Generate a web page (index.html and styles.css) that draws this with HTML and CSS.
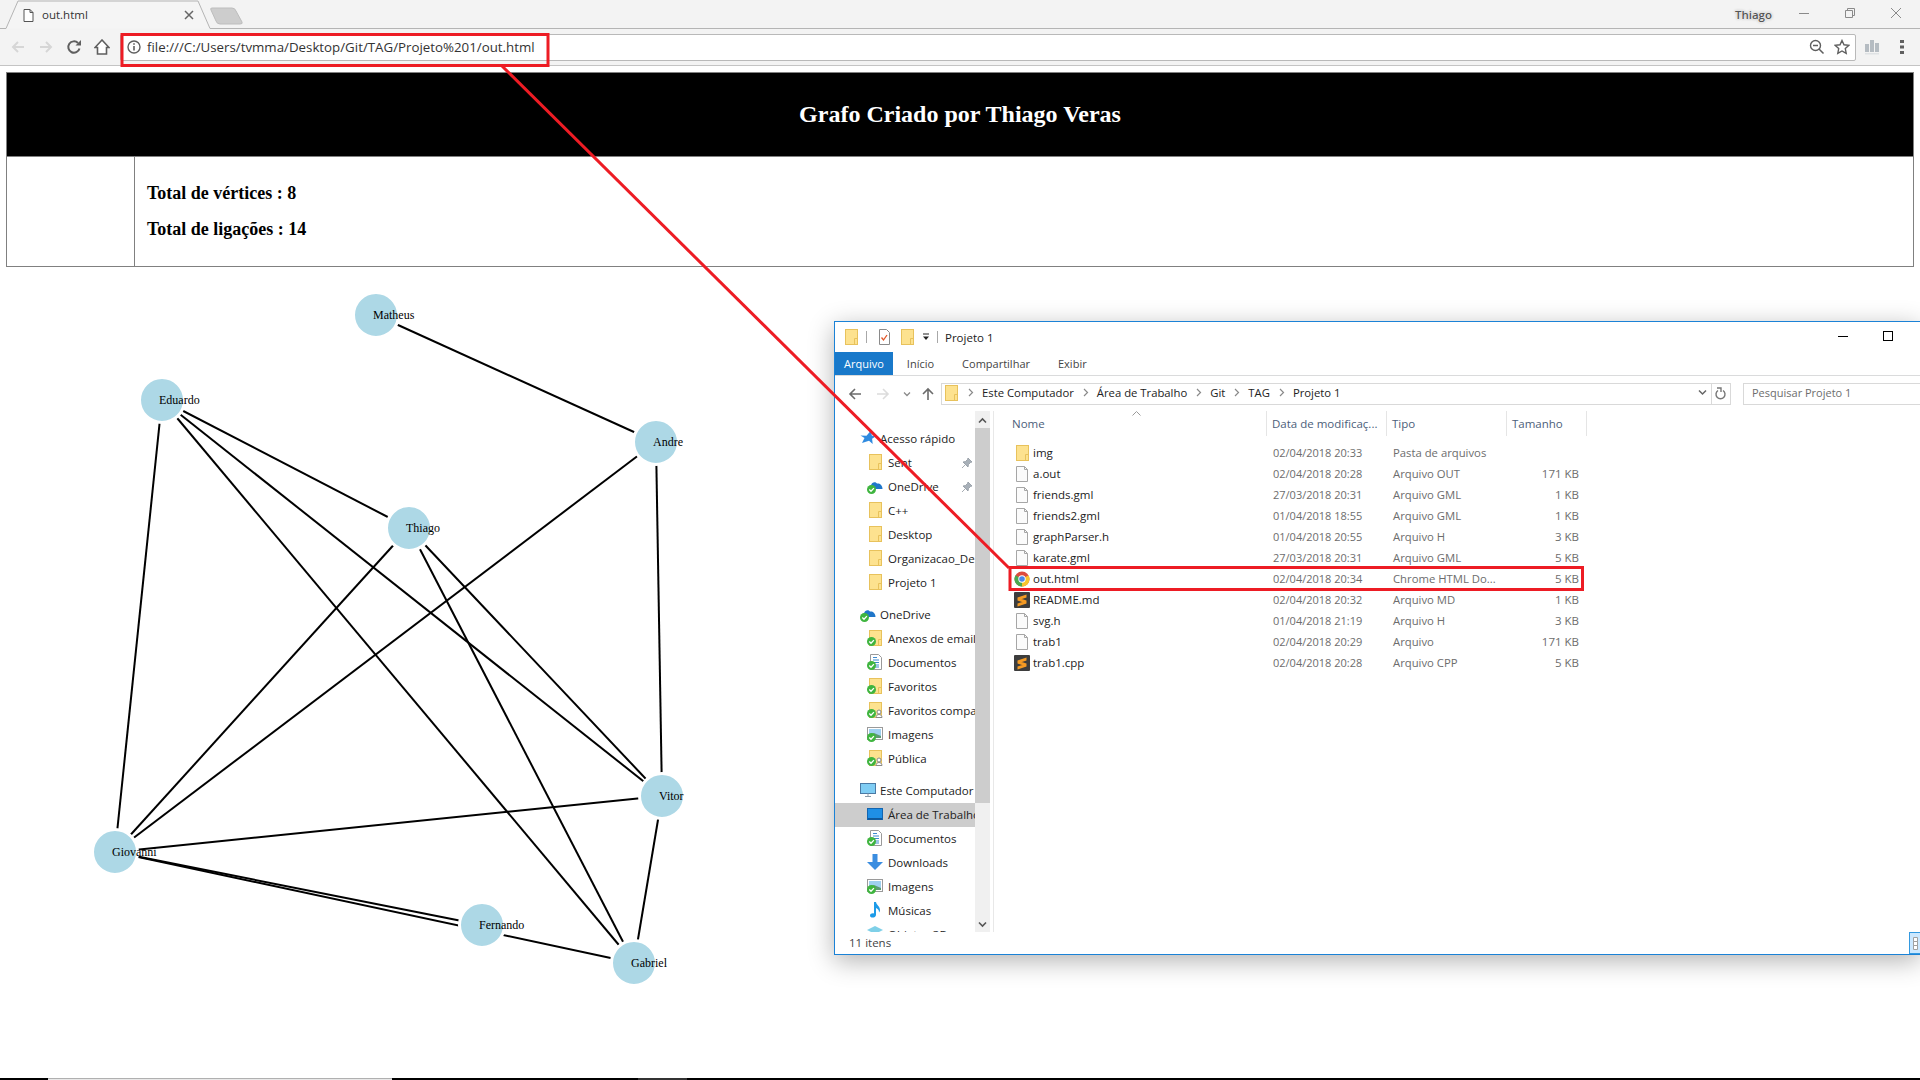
FILE: index.html
```html
<!DOCTYPE html>
<html lang="pt-BR">
<head>
  <meta charset="UTF-8" />
  <meta name="viewport" content="width=device-width, initial-scale=1.0" />
  <title>out.html</title>
  <link rel="stylesheet" href="styles.css">
</head>
<body>
  <!-- shared icons -->
  <svg class="hidden">
    <symbol id="i-folder" viewBox="0 0 16 16"><rect x="2.5" y="0.5" width="12" height="15" fill="#fde28f" stroke="#e8c25c"/><path d="M11.5 15.5V9.5h3" fill="none" stroke="#e8c25c"/></symbol>
    <symbol id="i-doc" viewBox="0 0 16 16"><path d="M2.5.5h8l3 3v12h-11z" fill="#fbfbfb" stroke="#a6a6a6"/><path d="M10.5.5v3h3" fill="none" stroke="#a6a6a6"/></symbol>
    <symbol id="i-check" viewBox="0 0 16 16"><circle cx="4.5" cy="11.5" r="4.5" fill="#3fb53f"/><path d="M2.3 11.5l1.7 1.8 2.9-3.2" fill="none" stroke="#fff" stroke-width="1.3"/></symbol>
    <symbol id="i-cloud" viewBox="0 0 16 16"><path d="M4 11c-2.500 0-2.500-3.500 0-3.800C4.800 4.500 8 3 10 5.500c2.500-.5 5.500 1.500 5.500 5.500z" fill="#1f76c9"/></symbol>
    <symbol id="i-star" viewBox="0 0 16 16"><path d="M11 .5l.8 5 3.700 1-3.400 2.200.6 5.300-3.700-3.300L2 13l2.500-5L.5 5.500l6 .2z" fill="#2f8be0"/></symbol>
    <symbol id="i-pc" viewBox="0 0 16 16"><rect x=".5" y="1.500" width="15" height="10" fill="#7fcdf4" stroke="#4a7aa5"/><path d="M5 14.500h6M8 11.500v3" stroke="#8a9aa8"/></symbol>
    <symbol id="i-desktop" viewBox="0 0 16 16"><rect x=".5" y="2.500" width="15" height="11" fill="#1f8fe6" stroke="#1365b0"/><path d="M1 12.800h14" stroke="#0b3f78"/></symbol>
    <symbol id="i-docs" viewBox="0 0 16 16"><path d="M3.500.5h8l3 3v12h-11z" fill="#fff" stroke="#9a9a9a"/><path d="M6 3.500h4M6 6h6M6 8.500h6M6 11h6M6 13h6" stroke="#3c8bd0"/></symbol>
    <symbol id="i-pics" viewBox="0 0 16 16"><rect x=".5" y="1.500" width="15" height="12" fill="#fff" stroke="#9a9a9a"/><rect x="2" y="3" width="12" height="9" fill="#9fd0ef"/><path d="M2 9l5-2 7 3v2H2z" fill="#5c9b72"/></symbol>
    <symbol id="i-dl" viewBox="0 0 16 16"><path d="M5.500 0h5v8H16l-8 8-8-8h5.500z" fill="#3a8de0"/></symbol>
    <symbol id="i-music" viewBox="0 0 16 16"><path d="M7 0h2c.3 3 4 4 4 8 0 1-.5 2-1 2.500.3-3-2-4-3-4.500v7c0 3-6 3.500-6 .8C3 11.500 5.500 11 7 11.500z" fill="#1d9be8"/></symbol>
    <symbol id="i-share" viewBox="0 0 16 16"><circle cx="12" cy="10" r="2" fill="#fff" stroke="#8a8a8a"/><path d="M9 15.500c0-4 6-4 6 0z" fill="#fff" stroke="#8a8a8a"/></symbol>
    <symbol id="i-pin" viewBox="0 0 12 12"><path d="M7 1l4 4-1.500.5-2 2L7 10 2 5l2.500-.5 2-2zM4 8l-3 3" fill="#a8b0b8" stroke="#8f979f" stroke-width=".8"/></symbol>
    <symbol id="i-crumb" viewBox="0 0 7 9"><path d="M2 1l3.500 3.500L2 8" fill="none" stroke="#8a8a8a" stroke-width="1.200"/></symbol>
    <symbol id="i-sublime" viewBox="0 0 16 16"><rect width="16" height="16" rx="1" fill="#3d3d3d"/><path d="M12.500 2.500v3l-9 3v-3zM3.500 5.500l9 3v3l-9-3zM12.500 8.500v3l-9 3v-3z" fill="#f59a23"/></symbol>
  </svg>

  <header class="browser">
    <div class="tabstrip">
      <svg class="tab-shape" width="250" height="29" viewBox="0 0 250 29">
        <path d="M0 28.500h6L18 1h180l12 27.500h40" fill="#f5f5f5" stroke="#b4b4b4"/>
        <path d="M212 8h20q3 0 4 3l6 11q1 2-2 2h-20q-3 0-4-3l-5-11q-1-2 1-2z" fill="#cdcdcd" stroke="#bdbdbd"/>
        <path d="M24 9.500h6l3 3v9h-9zM30 9.500v3h3" fill="#fff" stroke="#555"/>
        <path d="M185 11l8 8M193 11l-8 8" stroke="#666" stroke-width="1.500"/>
      </svg>
      <span class="tab-title">out.html</span>
      <span class="profile">Thiago</span>
      <div class="win-buttons">
        <svg width="10" height="10" viewBox="0 0 10 10"><path d="M0 5.500h10" stroke="#8a8a8a"/></svg>
        <svg width="10" height="10" viewBox="0 0 10 10"><path d="M.5 2.500h7v7h-7zM2.500 2.500v-2h7v7h-2" fill="none" stroke="#8a8a8a"/></svg>
        <svg width="10" height="10" viewBox="0 0 10 10"><path d="M0 0l10 10M10 0L0 10" stroke="#8a8a8a"/></svg>
      </div>
    </div>
    <div class="toolbar">
      <div class="nav-buttons">
        <svg width="16" height="16" viewBox="0 0 16 16"><path d="M14 8H3M8 3L3 8l5 5" fill="none" stroke="#d6d6d6" stroke-width="2"/></svg>
        <svg width="16" height="16" viewBox="0 0 16 16"><path d="M2 8h11M8 3l5 5-5 5" fill="none" stroke="#d6d6d6" stroke-width="2"/></svg>
        <svg width="16" height="16" viewBox="0 0 16 16"><path d="M13.500 9.500A5.700 5.700 0 1 1 12 4" fill="none" stroke="#5f5f5f" stroke-width="2"/><path d="M9.500 6.500H15V1z" fill="#5f5f5f"/></svg>
        <svg width="16" height="16" viewBox="0 0 16 16"><path d="M8 1L1 8.500h2.500v6.500h9V8.500H15z" fill="#fff" stroke="#5f5f5f" stroke-width="1.600"/></svg>
      </div>
      <div class="omnibox">
        <svg width="14" height="14" viewBox="0 0 14 14"><circle cx="7" cy="7" r="6" fill="none" stroke="#5f5f5f" stroke-width="1.400"/><path d="M7 6v4.500M7 3.200v1.600" stroke="#5f5f5f" stroke-width="1.600"/></svg>
        <span class="url">file:///C:/Users/tvmma/Desktop/Git/TAG/Projeto%201/out.html</span>
        <svg class="omni-end" width="16" height="16" viewBox="0 0 16 16"><circle cx="6.500" cy="6.500" r="5" fill="none" stroke="#5f5f5f" stroke-width="1.400"/><path d="M4 6.500h5M10 10l4.500 4.500" stroke="#5f5f5f" stroke-width="1.500"/></svg>
        <svg width="16" height="16" viewBox="0 0 16 16"><path d="M8 1.500l2 4.300 4.700.6-3.400 3.200.9 4.700L8 12l-4.200 2.300.9-4.700L1.300 6.400 6 5.800z" fill="none" stroke="#5f5f5f" stroke-width="1.400"/></svg>
      </div>
      <div class="toolbar-end">
        <svg width="16" height="16" viewBox="0 0 16 16"><path d="M1 5h4v8H1zM6 1h4v12H6zM11 4h4v9h-4z" fill="#b5bcc2"/><path d="M1 14h14v1.500H1z" fill="#dfe2e4"/></svg>
        <svg width="4" height="14" viewBox="0 0 4 14"><path d="M0 0h4v3H0zM0 5.500h4v3H0zM0 11h4v3H0z" fill="#5f5f5f"/></svg>
      </div>
    </div>
  </header>

  <main class="page">
    <table class="summary">
      <tr><th colspan="2">Grafo Criado por Thiago Veras</th></tr>
      <tr>
        <td class="summary-side"></td>
        <td class="summary-info">
          <h3>Total de vértices : 8</h3>
          <h3>Total de ligações : 14</h3>
        </td>
      </tr>
    </table>

    <svg class="graph" width="1920" height="811" viewBox="0 267 1920 811">
      <g class="edges">
        <line x1="376" y1="315" x2="656" y2="442"/>
        <line x1="162" y1="400" x2="409" y2="528"/>
        <line x1="162" y1="400" x2="662" y2="796"/>
        <line x1="162" y1="400" x2="634" y2="963"/>
        <line x1="162" y1="400" x2="115" y2="852"/>
        <line x1="656" y1="442" x2="115" y2="852"/>
        <line x1="656" y1="442" x2="662" y2="796"/>
        <line x1="409" y1="528" x2="115" y2="852"/>
        <line x1="409" y1="528" x2="662" y2="796"/>
        <line x1="409" y1="528" x2="634" y2="963"/>
        <line x1="662" y1="796" x2="115" y2="852"/>
        <line x1="662" y1="796" x2="634" y2="963"/>
        <line x1="115" y1="852" x2="482" y2="925"/>
        <line x1="115" y1="852" x2="634" y2="963"/>
      </g>
      <g class="nodes">
        <circle cx="376" cy="315" r="22.500"/>
        <circle cx="162" cy="400" r="22.500"/>
        <circle cx="656" cy="442" r="22.500"/>
        <circle cx="409" cy="528" r="22.500"/>
        <circle cx="662" cy="796" r="22.500"/>
        <circle cx="115" cy="852" r="22.500"/>
        <circle cx="482" cy="925" r="22.500"/>
        <circle cx="634" cy="963" r="22.500"/>
      </g>
      <g class="labels">
        <text x="373" y="319">Matheus</text>
        <text x="159" y="404">Eduardo</text>
        <text x="653" y="446">Andre</text>
        <text x="406" y="532">Thiago</text>
        <text x="659" y="800">Vitor</text>
        <text x="112" y="856">Giovanni</text>
        <text x="479" y="929">Fernando</text>
        <text x="631" y="967">Gabriel</text>
      </g>
    </svg>
  </main>

  <div class="page-edge">
    <span class="edge-black edge-a"></span>
    <span class="edge-track"></span>
    <span class="edge-black edge-b"></span>
    <span class="edge-dark"></span>
    <span class="edge-black edge-c"></span>
  </div>

  <section class="explorer">
    <div class="ex-title">
      <svg class="ico"><use href="#i-folder"/></svg>
      <span class="ex-sep"></span>
      <svg class="ico ex-check" viewBox="0 0 16 16"><path d="M3.500.5h7l3 3v12h-10z" fill="#fff" stroke="#8a8a8a"/><path d="M5.500 8.500l2 2.500 3.500-5" fill="none" stroke="#e2582a" stroke-width="1.300"/></svg>
      <svg class="ico"><use href="#i-folder"/></svg>
      <svg width="8" height="8" viewBox="0 0 8 8"><path d="M1 1h6" stroke="#222"/><path d="M1 3.500h6L4 7z" fill="#222"/></svg>
      <span class="ex-sep"></span>
      <span>Projeto 1</span>
      <div class="ex-buttons">
        <span class="ex-min"></span>
        <span class="ex-max"></span>
      </div>
    </div>
    <nav class="ex-ribbon">
      <span class="ribbon-file">Arquivo</span>
      <span>Início</span>
      <span>Compartilhar</span>
      <span>Exibir</span>
    </nav>
    <div class="ex-nav">
      <svg width="14" height="14" viewBox="0 0 14 14"><path d="M13 7H2M7 2L2 7l5 5" fill="none" stroke="#6b6b6b" stroke-width="1.600"/></svg>
      <svg class="nav-forward" width="14" height="14" viewBox="0 0 14 14"><path d="M1 7h11M7 2l5 5-5 5" fill="none" stroke="#dcdcdc" stroke-width="1.600"/></svg>
      <svg class="nav-recent" width="8" height="8" viewBox="0 0 8 8"><path d="M1 2.500l3 3 3-3" fill="none" stroke="#8a8a8a" stroke-width="1.300"/></svg>
      <svg class="nav-up" width="14" height="14" viewBox="0 0 14 14"><path d="M7 13V2M2 7l5-5 5 5" fill="none" stroke="#6b6b6b" stroke-width="1.600"/></svg>
      <div class="ex-address">
        <svg class="ico"><use href="#i-folder"/></svg>
        <svg class="crumb"><use href="#i-crumb"/></svg><span>Este Computador</span>
        <svg class="crumb"><use href="#i-crumb"/></svg><span>Área de Trabalho</span>
        <svg class="crumb"><use href="#i-crumb"/></svg><span>Git</span>
        <svg class="crumb"><use href="#i-crumb"/></svg><span>TAG</span>
        <svg class="crumb"><use href="#i-crumb"/></svg><span>Projeto 1</span>
        <svg class="address-drop" width="9" height="7" viewBox="0 0 9 7"><path d="M1 1.500l3.500 3.500L8 1.500" fill="none" stroke="#666" stroke-width="1.500"/></svg>
        <span class="address-refresh">
          <svg width="12" height="13" viewBox="0 0 12 13"><path d="M3 3.500a4.500 4.500 0 1 0 5 0" fill="none" stroke="#777" stroke-width="1.400"/><path d="M2 1h4v4" fill="none" stroke="#777" stroke-width="1.400"/></svg>
        </span>
      </div>
      <div class="ex-search">Pesquisar Projeto 1</div>
    </div>

    <div class="ex-body">
      <aside class="tree">
        <div class="tree-item top"><svg class="ico"><use href="#i-star"/></svg>Acesso rápido</div>
        <div class="tree-item"><svg class="ico"><use href="#i-folder"/></svg>Sent<svg class="pin"><use href="#i-pin"/></svg></div>
        <div class="tree-item"><svg class="ico"><use href="#i-cloud"/><use href="#i-check"/></svg>OneDrive<svg class="pin"><use href="#i-pin"/></svg></div>
        <div class="tree-item"><svg class="ico"><use href="#i-folder"/></svg>C++</div>
        <div class="tree-item"><svg class="ico"><use href="#i-folder"/></svg>Desktop</div>
        <div class="tree-item"><svg class="ico"><use href="#i-folder"/></svg>Organizacao_De</div>
        <div class="tree-item last"><svg class="ico"><use href="#i-folder"/></svg>Projeto 1</div>

        <div class="tree-item top"><svg class="ico"><use href="#i-cloud"/><use href="#i-check"/></svg>OneDrive</div>
        <div class="tree-item"><svg class="ico"><use href="#i-folder"/><use href="#i-check"/></svg>Anexos de email</div>
        <div class="tree-item"><svg class="ico"><use href="#i-docs"/><use href="#i-check"/></svg>Documentos</div>
        <div class="tree-item"><svg class="ico"><use href="#i-folder"/><use href="#i-check"/></svg>Favoritos</div>
        <div class="tree-item"><svg class="ico"><use href="#i-folder"/><use href="#i-share"/><use href="#i-check"/></svg>Favoritos compartilhados</div>
        <div class="tree-item"><svg class="ico"><use href="#i-pics"/><use href="#i-check"/></svg>Imagens</div>
        <div class="tree-item last"><svg class="ico"><use href="#i-folder"/><use href="#i-share"/><use href="#i-check"/></svg>Pública</div>

        <div class="tree-item top"><svg class="ico"><use href="#i-pc"/></svg>Este Computador</div>
        <div class="tree-item selected"><svg class="ico"><use href="#i-desktop"/></svg>Área de Trabalho</div>
        <div class="tree-item"><svg class="ico"><use href="#i-docs"/><use href="#i-check"/></svg>Documentos</div>
        <div class="tree-item"><svg class="ico"><use href="#i-dl"/></svg>Downloads</div>
        <div class="tree-item"><svg class="ico"><use href="#i-pics"/><use href="#i-check"/></svg>Imagens</div>
        <div class="tree-item"><svg class="ico"><use href="#i-music"/></svg>Músicas</div>
        <div class="tree-item"><svg class="ico" viewBox="0 0 16 16"><path d="M8 0l8 4-8 4-8-4z" fill="#7fd0e8"/></svg>Objetos 3D</div>
      </aside>
      <div class="tree-scroll">
        <svg width="9" height="7" viewBox="0 0 9 7"><path d="M1 5.500L4.500 2 8 5.500" fill="none" stroke="#555" stroke-width="1.600"/></svg>
        <span class="tree-thumb"></span>
        <svg width="9" height="7" viewBox="0 0 9 7"><path d="M1 1.500L4.500 5 8 1.500" fill="none" stroke="#555" stroke-width="1.600"/></svg>
      </div>
      <div class="files">
        <div class="files-head">
          <span class="head-name">Nome<svg class="sort" width="9" height="5" viewBox="0 0 9 5"><path d="M.5 4.500l4-4 4 4" fill="none" stroke="#9a9a9a"/></svg></span>
          <span>Data de modificaç...</span>
          <span>Tipo</span>
          <span>Tamanho</span>
        </div>
        <div class="file-row"><span class="file-name"><svg class="ico"><use href="#i-folder"/></svg>img</span><span class="date">02/04/2018 20:33</span><span class="kind">Pasta de arquivos</span><span class="size"></span></div>
        <div class="file-row"><span class="file-name"><svg class="ico"><use href="#i-doc"/></svg>a.out</span><span class="date">02/04/2018 20:28</span><span class="kind">Arquivo OUT</span><span class="size">171 KB</span></div>
        <div class="file-row"><span class="file-name"><svg class="ico"><use href="#i-doc"/></svg>friends.gml</span><span class="date">27/03/2018 20:31</span><span class="kind">Arquivo GML</span><span class="size">1 KB</span></div>
        <div class="file-row"><span class="file-name"><svg class="ico"><use href="#i-doc"/></svg>friends2.gml</span><span class="date">01/04/2018 18:55</span><span class="kind">Arquivo GML</span><span class="size">1 KB</span></div>
        <div class="file-row"><span class="file-name"><svg class="ico"><use href="#i-doc"/></svg>graphParser.h</span><span class="date">01/04/2018 20:55</span><span class="kind">Arquivo H</span><span class="size">3 KB</span></div>
        <div class="file-row"><span class="file-name"><svg class="ico"><use href="#i-doc"/></svg>karate.gml</span><span class="date">27/03/2018 20:31</span><span class="kind">Arquivo GML</span><span class="size">5 KB</span></div>
        <div class="file-row"><span class="file-name"><svg class="ico" viewBox="0 0 16 16"><circle cx="8" cy="8" r="7.500" fill="#dd4b3e"/><path d="M8 8l6.500-3.800a7.500 7.500 0 0 1-6.500 11.300z" fill="#f6c52f"/><path d="M8 8L1.500 4.200a7.500 7.500 0 0 0 6.500 11.300z" fill="#4aa84f"/><circle cx="8" cy="8" r="3.700" fill="#fff"/><circle cx="8" cy="8" r="2.800" fill="#4a86e8"/></svg>out.html</span><span class="date">02/04/2018 20:34</span><span class="kind">Chrome HTML Do...</span><span class="size">5 KB</span></div>
        <div class="file-row"><span class="file-name"><svg class="ico"><use href="#i-sublime"/></svg>README.md</span><span class="date">02/04/2018 20:32</span><span class="kind">Arquivo MD</span><span class="size">1 KB</span></div>
        <div class="file-row"><span class="file-name"><svg class="ico"><use href="#i-doc"/></svg>svg.h</span><span class="date">01/04/2018 21:19</span><span class="kind">Arquivo H</span><span class="size">3 KB</span></div>
        <div class="file-row"><span class="file-name"><svg class="ico"><use href="#i-doc"/></svg>trab1</span><span class="date">02/04/2018 20:29</span><span class="kind">Arquivo</span><span class="size">171 KB</span></div>
        <div class="file-row"><span class="file-name"><svg class="ico"><use href="#i-sublime"/></svg>trab1.cpp</span><span class="date">02/04/2018 20:28</span><span class="kind">Arquivo CPP</span><span class="size">5 KB</span></div>
      </div>
    </div>

    <footer class="ex-status">
      <span>11 itens</span>
      <span class="view-toggle">
        <svg width="6" height="14" viewBox="0 0 6 14"><path d="M.5.500h4v4h-4zM.5 4.500h4v4h-4zM.5 8.500h4v4h-4z" fill="#fff" stroke="#a0a0a0"/></svg>
      </span>
    </footer>
  </section>

  <!-- red marks drawn on top of the screenshot -->
  <svg class="marks" width="1920" height="1080" viewBox="0 0 1920 1080">
    <line x1="502" y1="66" x2="1009" y2="568"/>
    <rect x="122" y="34.500" width="426" height="31"/>
    <rect x="1010" y="567.500" width="572.500" height="22"/>
  </svg>
</body>
</html>
```

FILE: styles.css
```css
html, body {
  margin: 0;
  height: 100%;
}

body {
  position: relative;
  display: flex;
  flex-direction: column;
  height: 1080px;
  overflow: hidden;
  background: #fff;
  font-family: "Open Sans", "Noto Sans", sans-serif;
  font-size: 11.5px;
  color: #222;
}

.hidden {
  display: none;
}

/* browser chrome */
.browser {
  background: #f3f3f3;
  border-bottom: 1px solid #c4c4c4;
}

.tabstrip {
  position: relative;
  display: flex;
  align-items: center;
  height: 29px;
}

.tab-shape {
  position: absolute;
  left: 0;
  top: 0;
}

.tab-title {
  position: relative;
  margin-left: 42px;
  color: #333;
}

.tabstrip::after {
  content: "";
  position: absolute;
  left: 250px;
  right: 0;
  bottom: 0;
  height: 1px;
  background: #b4b4b4;
}

.profile {
  margin-left: auto;
  margin-right: 27px;
  font-size: 11.5px;
  font-weight: 600;
  color: #555;
  text-shadow: 0 0 1px #fff, 0 0 2px #fff, 0 0 3px #888;
}

.win-buttons {
  display: flex;
  gap: 36px;
  margin-right: 19px;
  margin-top: -3px;
}

.toolbar {
  display: flex;
  align-items: center;
  height: 36px;
  padding-left: 10px;
}

.nav-buttons {
  display: flex;
  gap: 12px;
}

.omnibox {
  display: flex;
  align-items: center;
  gap: 6px;
  width: 1736px;
  height: 27px;
  margin-left: 10px;
  padding: 0 5px 0 6px;
  background: #fff;
  border: 1px solid #b9b9b9;
  border-radius: 2px;
  box-sizing: border-box;
}

.url {
  font-size: 13.3px;
  color: #333;
}

.omni-end {
  margin-left: auto;
  margin-right: 3px;
}

.toolbar-end {
  display: flex;
  align-items: center;
  gap: 20px;
  margin-left: 8px;
}

/* page content */
.page {
  flex: 1;
  min-height: 0;
  padding-top: 6px;
  font-family: "Liberation Serif", serif;
}

.summary {
  width: 1908px;
  margin-left: 6px;
  border-collapse: collapse;
  border: 1px solid #808080;
}

.summary th {
  height: 83px;
  padding: 0;
  background: #000;
  color: #fff;
  font-size: 24px;
  font-weight: bold;
}

.summary td {
  height: 109px;
  padding: 0;
  border: 1px solid #808080;
}

.summary-side {
  width: 127px;
}

.summary-info {
  padding-left: 12px !important;
}

.summary-info h3 {
  margin: 0;
  font-size: 18px;
  line-height: 21px;
  color: #000;
}

.summary-info h3 + h3 {
  margin-top: 15px;
}

.graph {
  display: block;
}

.edges line {
  stroke: #000;
  stroke-width: 2;
}

.nodes circle {
  fill: lightblue;
  stroke: #fff;
  stroke-width: 3;
}

.labels text {
  font-size: 12px;
  fill: #000;
}

.page-edge {
  display: flex;
  height: 2px;
}

.edge-black {
  background: #000;
}

.edge-a {
  width: 48px;
}

.edge-track {
  width: 344px;
  background: #e8e8e8;
  border-top: 1px solid #b0b0b0;
  box-sizing: border-box;
}

.edge-b {
  width: 246px;
}

.edge-dark {
  width: 49px;
  background: #333;
}

.edge-c {
  flex: 1;
}

/* explorer window, its right side is cut off by the screen */
.explorer {
  position: absolute;
  left: 834px;
  top: 321px;
  display: flex;
  flex-direction: column;
  width: 1086px;
  height: 634px;
  background: #fff;
  border: 1px solid #1b82d6;
  border-right: 0;
  box-sizing: border-box;
  box-shadow: 0 6px 24px rgba(0, 0, 0, 0.3);
}

.ico {
  flex: none;
  width: 16px;
  height: 16px;
}

.ex-title {
  display: flex;
  align-items: center;
  gap: 7px;
  height: 30px;
  padding-left: 8px;
}

.ex-check {
  margin-left: 2px;
}

.ex-sep {
  width: 1px;
  height: 12px;
  background: #a8a8a8;
}

.ex-buttons {
  position: absolute;
  left: 1003px;
  top: 9px;
  display: flex;
  align-items: center;
  gap: 35px;
}

.ex-min {
  width: 10px;
  height: 1px;
  background: #000;
}

.ex-max {
  width: 8px;
  height: 8px;
  border: 1px solid #000;
}

.ex-ribbon {
  display: flex;
  align-items: center;
  height: 23px;
  font-size: 11px;
  color: #444;
  border-bottom: 1px solid #dadbdc;
}

.ex-ribbon span {
  margin-left: 14px;
}

.ex-ribbon span + span + span {
  margin-left: 28px;
}

.ex-ribbon .ribbon-file {
  display: flex;
  align-items: center;
  height: 23px;
  margin-left: 0;
  padding: 0 9px;
  background: #1979ca;
  color: #fff;
}

.ex-nav {
  display: flex;
  align-items: center;
  height: 35px;
  padding-left: 13px;
}

.ex-nav svg {
  flex: none;
}

.nav-forward {
  margin-left: 14px;
}

.nav-recent {
  margin-left: 13px;
}

.nav-up {
  margin-left: 10px;
}

.ex-address {
  flex: none;
  display: flex;
  align-items: center;
  gap: 8px;
  width: 790px;
  height: 22px;
  margin-left: 6px;
  padding: 0 0 2px 1px;
  font-size: 11.3px;
  border: 1px solid #d9d9d9;
  box-sizing: border-box;
}

.crumb {
  flex: none;
  width: 7px;
  height: 9px;
}

.address-drop {
  margin-left: auto;
}

.address-refresh {
  align-self: stretch;
  display: flex;
  align-items: center;
  justify-content: center;
  width: 18px;
  margin: 0 0 -2px -4px;
  border-left: 1px solid #d9d9d9;
}

.ex-search {
  flex: 1;
  display: flex;
  align-items: center;
  height: 22px;
  margin-left: 12px;
  padding: 0 0 2px 8px;
  font-size: 11px;
  color: #6d6d6d;
  border: 1px solid #d9d9d9;
  border-right: 0;
  box-sizing: border-box;
}

.ex-body {
  flex: 1;
  min-height: 0;
  display: flex;
  overflow: hidden;
}

.tree {
  flex: none;
  width: 140px;
  padding-top: 16px;
  overflow: hidden;
}

.tree-item {
  position: relative;
  display: flex;
  align-items: center;
  gap: 5px;
  height: 24px;
  padding: 0 0 2px 32px;
  box-sizing: border-box;
  white-space: nowrap;
}

.tree-item.top {
  gap: 4px;
  padding-left: 25px;
}

.tree-item.last {
  margin-bottom: 8px;
}

.tree-item.selected {
  background: #cdcdcd;
}

.pin {
  position: absolute;
  left: 126px;
  top: 6px;
  width: 12px;
  height: 12px;
}

.tree-scroll {
  flex: none;
  position: relative;
  display: flex;
  flex-direction: column;
  align-items: center;
  justify-content: space-between;
  width: 16px;
  padding: 6px 0 4px;
  background: #f0f0f0;
  box-sizing: border-box;
  border-right: 1px solid #fff;
}

.tree-thumb {
  position: absolute;
  left: 0;
  top: 17px;
  width: 15px;
  height: 375px;
  background: #cdcdcd;
}

.files {
  flex: 1;
  border-left: 1px solid #e8e8e8;
  margin-left: 2px;
}

.files-head,
.file-row {
  display: grid;
}

.files-head {
  grid-template-columns: 273px 120px 120px 80px;
  width: 593px;
  height: 25px;
  margin-bottom: 7px;
  color: #4c607a;
  font-size: 11.5px;
}

.files-head span {
  position: relative;
  display: flex;
  align-items: center;
  padding-left: 5px;
  border-right: 1px solid #e5e5e5;
  box-sizing: border-box;
  white-space: nowrap;
  overflow: hidden;
}

.files-head .head-name {
  padding-left: 18px;
  overflow: visible;
}

.sort {
  position: absolute;
  left: 138px;
  top: 0;
}

.file-row {
  grid-template-columns: 259px 120px 120px 66px;
  align-items: center;
  height: 21px;
  padding: 0 0 2px 20px;
  box-sizing: border-box;
  color: #6d6d6d;
}

.file-name {
  display: flex;
  align-items: center;
  gap: 3px;
  color: #222;
}

.date {
  font-size: 11px;
}

.kind {
  font-size: 11.3px;
}

.size {
  text-align: right;
}

.ex-status {
  position: relative;
  display: flex;
  align-items: center;
  height: 22px;
  padding: 0 0 2px 14px;
  box-sizing: border-box;
  color: #444;
}

.view-toggle {
  position: absolute;
  left: 1074px;
  top: 0;
  width: 11px;
  height: 22px;
  padding: 4px 0 0 3px;
  background: #cce8ff;
  border: 1px solid #3399e0;
  border-right: 0;
  box-sizing: border-box;
}

/* annotation */
.marks {
  position: absolute;
  left: 0;
  top: 0;
  pointer-events: none;
}

.marks line {
  stroke: #ed1c24;
  stroke-width: 3;
}

.marks rect {
  fill: none;
  stroke: #ed1c24;
  stroke-width: 3;
}
```
